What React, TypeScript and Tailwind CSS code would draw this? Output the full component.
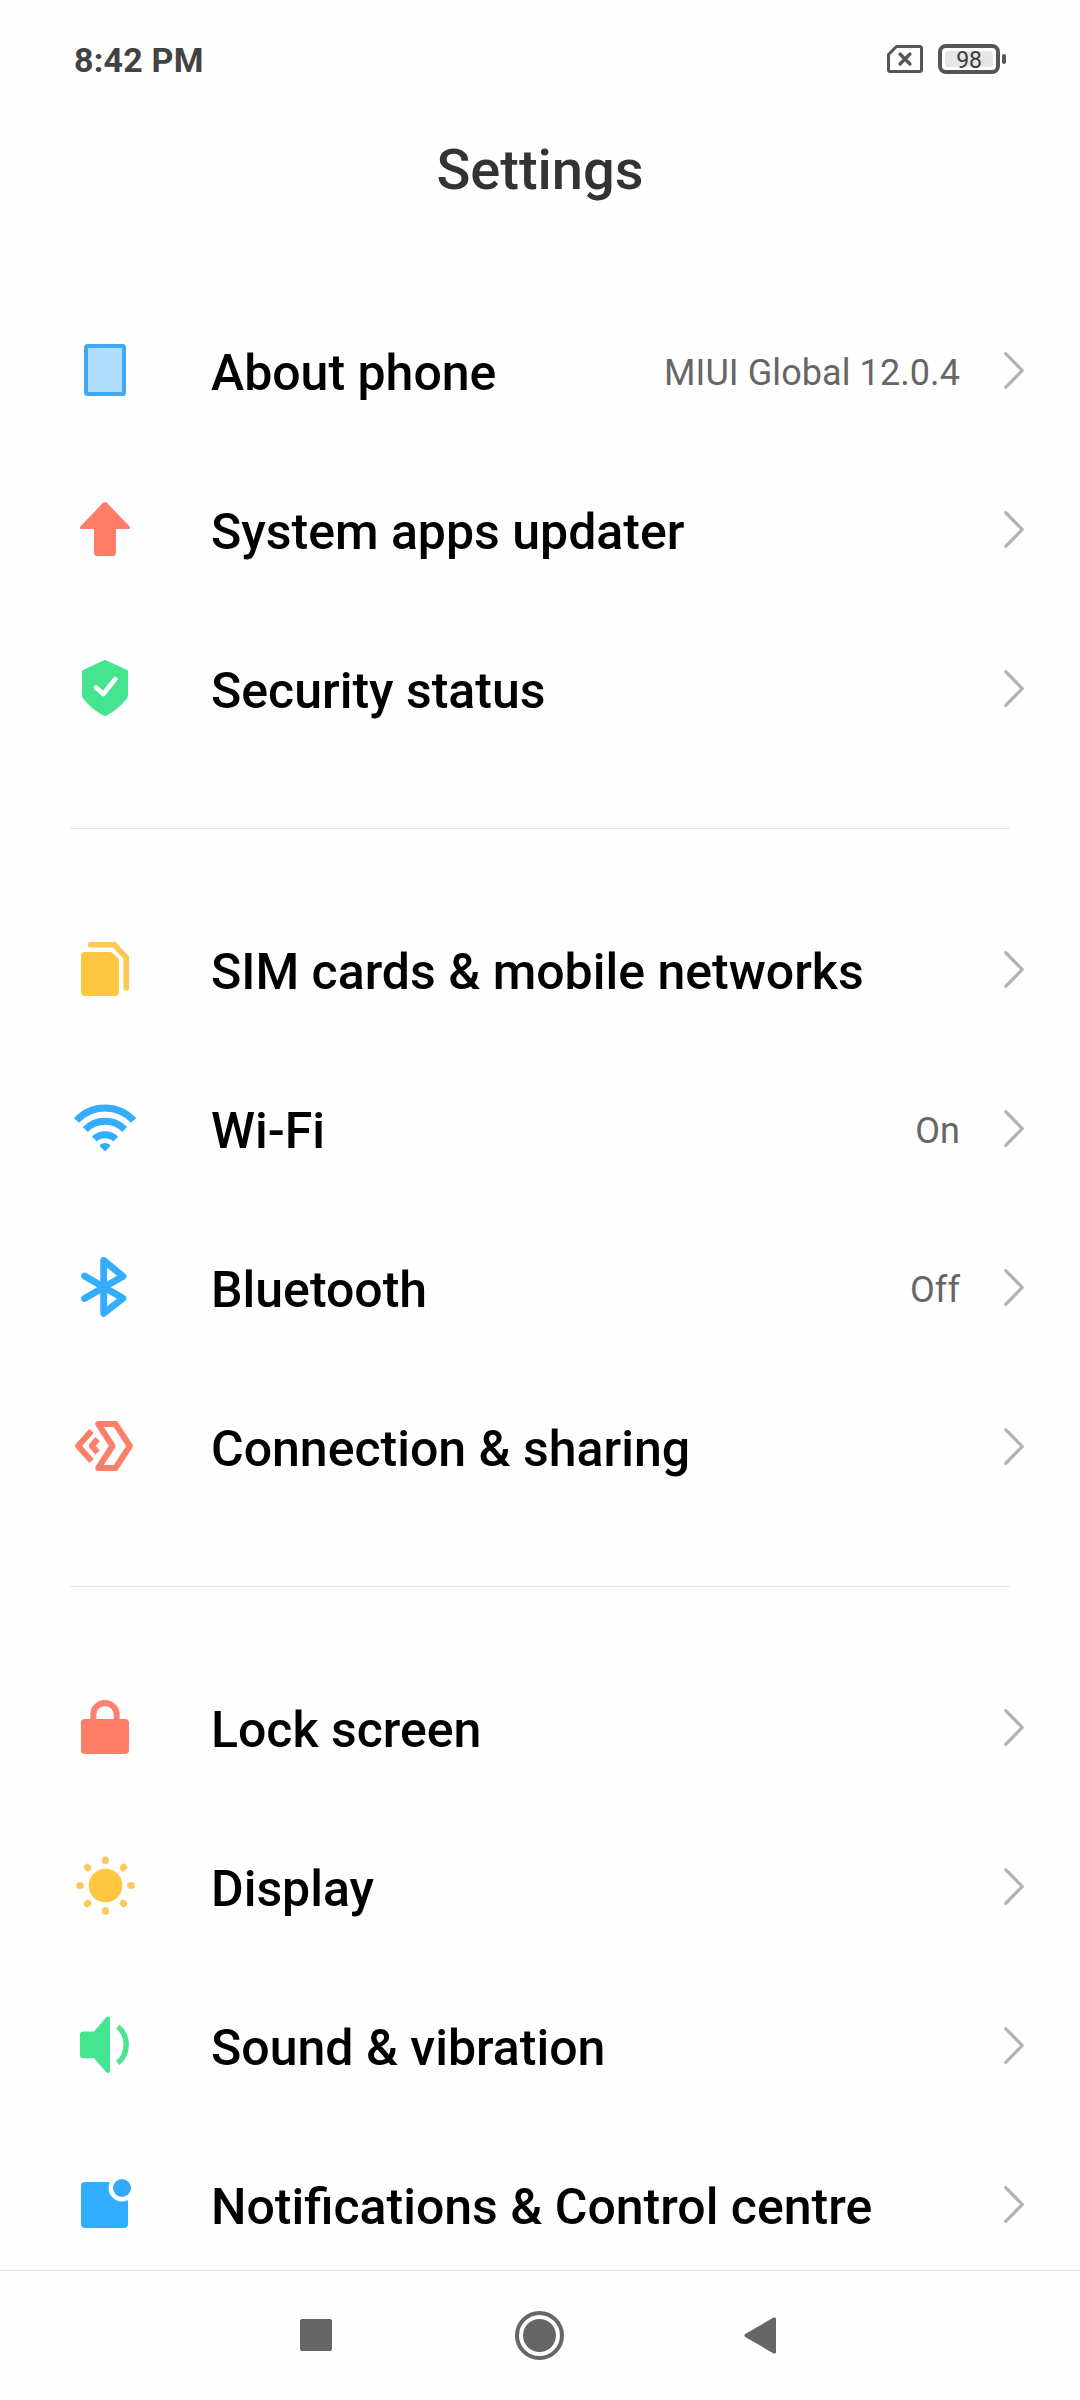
import type { ReactNode } from "react";

type Item = {
  label: string;
  value?: string;
  icon: ReactNode;
};

const RAYS = [0, 45, 90, 135, 180, 225, 270, 315];

const PhoneIcon = () => (
  <rect x="13" y="8" width="38" height="48" rx="1.5" fill="#b0defe" stroke="#41a9f1" strokeWidth="4" />
);

const UpdateIcon = () => (
  <path
    d="M30.4 5.6Q32 4.2 33.6 5.6L56.5 29.3Q58 32 55.5 32H43V55.5Q43 59 39.5 59H24.5Q21 59 21 55.5V32H8.5Q6 32 7.5 29.3Z"
    fill="#ff7c66"
  />
);

const ShieldIcon = () => (
  <>
    <path
      d="M30.5 4.5Q32 3.5 33.5 4.5L54 14Q55 14.5 55 15.5V39.5Q55 41.5 53.5 43Q45 53.5 34 59.3Q32 60.5 30 59.3Q19 53.5 10.5 43Q9 41.5 9 39.5V15.5Q9 14.5 10 14Z"
      fill="#44e58e"
    />
    <path d="M23 31.5L30.3 38L42.3 23" fill="none" stroke="#fff" strokeWidth="4.6" strokeLinecap="round" strokeLinejoin="round" />
  </>
);

const SimIcon = () => (
  <>
    <path
      d="M12 15H36.5Q38.5 15 39.8 16.3L44.5 20.5Q46 22 46 24V55Q46 59 42 59H12Q8 59 8 55V19Q8 15 12 15Z"
      fill="#ffc642"
    />
    <path d="M17.5 7.7H41.2L53.3 20.5V51" fill="none" stroke="#fcc853" strokeWidth="5.6" strokeLinecap="round" />
  </>
);

const WifiIcon = () => (
  <>
    <g fill="none" stroke="#34adff" strokeWidth="7">
      <path d="M3.5 24.5A38.6 38.6 0 0 1 60.5 24.5" />
      <path d="M12.3 33.5A27.5 27.5 0 0 1 51.7 33.5" />
      <path d="M21.3 43A15.6 15.6 0 0 1 42.7 43" />
    </g>
    <path d="M27.3 48.6Q32 45.2 36.7 48.6Q37.6 49.6 36.7 50.7L33 54.5Q32 55.4 31 54.5L27.3 50.7Q26.4 49.6 27.3 48.6Z" fill="#34adff" />
  </>
);

const BluetoothIcon = () => (
  <path
    d="M11.5 21L50 43.2L30.7 58.3V5.5L50 21.3L11.5 43.5"
    fill="none"
    stroke="#34adff"
    strokeWidth="6.8"
    strokeLinecap="round"
    strokeLinejoin="round"
  />
);

const ShareIcon = () => (
  <g fill="none" stroke="#fb7f6a" strokeWidth="6" strokeLinejoin="round">
    <path d="M25.3 10H42.5L56.8 32L42.5 54H25.3L39.5 32Z" />
    <path d="M18.5 17L5.1 32L18.5 47" />
    <path d="M24.5 25L18.8 31.8L24.5 38.6" />
  </g>
);

const LockIcon = () => (
  <>
    <path d="M20.3 28V19.7A11.7 11.7 0 0 1 43.7 19.7V28" fill="none" stroke="#f9836f" strokeWidth="6" />
    <rect x="8" y="24" width="48" height="35" rx="4" fill="#ff7c66" />
  </>
);

const DisplayIcon = () => (
  <>
    <circle cx="32.5" cy="31.5" r="16.8" fill="#ffc642" />
    {RAYS.map((angle) => (
      <rect
        key={angle}
        x="29.2"
        y="2.4"
        width="6.6"
        height="7.4"
        rx="2.6"
        fill="#fbc859"
        transform={`rotate(${angle} 32.5 31.5)`}
      />
    ))}
  </>
);

const SoundIcon = () => (
  <>
    <path
      d="M10 18.5H21L33 4.4Q34.2 3.2 35.5 3.5Q37 3.8 37 5.5V58Q37 59.6 35.5 60Q34.2 60.3 33 59L21 45.3H10Q7 45.3 7 42.3V21.5Q7 18.5 10 18.5Z"
      fill="#44e58e"
    />
    <path d="M44.8 13.5A24 24 0 0 1 44.8 50" fill="none" stroke="#4be493" strokeWidth="5.4" />
  </>
);

const NotificationIcon = () => (
  <>
    <rect x="8" y="10" width="47" height="46" rx="4" fill="#30adff" />
    <circle cx="49" cy="16" r="13.5" fill="#fefefe" />
    <circle cx="49" cy="16" r="9" fill="#34a9fb" />
  </>
);

const groups: Item[][] = [
  [
    { label: "About phone", value: "MIUI Global 12.0.4", icon: <PhoneIcon /> },
    { label: "System apps updater", icon: <UpdateIcon /> },
    { label: "Security status", icon: <ShieldIcon /> },
  ],
  [
    { label: "SIM cards & mobile networks", icon: <SimIcon /> },
    { label: "Wi-Fi", value: "On", icon: <WifiIcon /> },
    { label: "Bluetooth", value: "Off", icon: <BluetoothIcon /> },
    { label: "Connection & sharing", icon: <ShareIcon /> },
  ],
  [
    { label: "Lock screen", icon: <LockIcon /> },
    { label: "Display", icon: <DisplayIcon /> },
    { label: "Sound & vibration", icon: <SoundIcon /> },
    { label: "Notifications & Control centre", icon: <NotificationIcon /> },
  ],
];

const StatusBar = () => (
  <div className="flex h-[118px] shrink-0 items-center justify-between pr-[74px] pl-[74px]">
    <span className="pt-[2px] text-[34px] leading-[40px] font-bold tracking-[0.2px] text-[#424242]">8:42 PM</span>
    <div className="flex items-center">
      {/* No SIM */}
      <svg width="36" height="28" viewBox="0 0 36 28" fill="none" stroke="#555" strokeLinecap="round" strokeLinejoin="round">
        <path d="M9.5 1.5H32.5Q34.5 1.5 34.5 3.5V24.5Q34.5 26.5 32.5 26.5H3.5Q1.5 26.5 1.5 24.5V9.5Z" strokeWidth="3" />
        <path d="M13 9L23 19M23 9L13 19" strokeWidth="3.2" />
      </svg>
      {/* Battery */}
      <div className="ml-[15px] flex h-[30px] w-[62px] items-center justify-center rounded-[8px] border-4 border-[#555] p-[3px]">
        <span className="flex h-4 w-full items-center justify-center rounded-[2px] bg-[#e6e6e6] pt-[3px] text-[23px] leading-[26px] tracking-[-0.3px] text-[#3c3c3c]">98</span>
      </div>
      <span className="ml-[2px] h-[10px] w-1 rounded-[2px] bg-[#555]" />
    </div>
  </div>
);

const Row = ({ label, value, icon }: Item) => (
  <div className="flex h-[159px] items-center pr-[56px] pl-[73px]">
    <svg className="shrink-0" width="64" height="65" viewBox="0 0 64 65">
      {icon}
    </svg>
    <span className="ml-[74px] flex-1 pt-[5px] text-[50px] leading-[58px] font-medium whitespace-nowrap text-black">{label}</span>
    {value && <span className="pt-[5px] text-[36px] leading-[42px] tracking-[0.08px] text-[#666]">{value}</span>}
    <svg className="ml-[44px] shrink-0" width="20" height="37" viewBox="0 0 20 37" fill="none">
      <path d="M1.7 1.7L18.3 18.5L1.7 35.3" stroke="#b2b2b2" strokeWidth="3.2" strokeLinecap="round" strokeLinejoin="round" />
    </svg>
  </div>
);

const NavBar = () => (
  <div className="flex h-[130px] shrink-0 items-start border-t border-[#e2e2e2] pt-[40px] pl-[300px]">
    <span className="mt-2 size-8 rounded-[2px] bg-[#666]" />
    <svg className="ml-[183px]" width="50" height="50" viewBox="0 0 50 50">
      <circle cx="24.5" cy="24.5" r="22.5" fill="none" stroke="#666" strokeWidth="4" />
      <circle cx="24.5" cy="24.5" r="16.5" fill="#666" />
    </svg>
    <svg className="mt-[6px] ml-[179px]" width="32" height="38" viewBox="0 0 32 38">
      <path d="M1.2 17.1L29.5 0.6Q32 -0.2 32 2V35Q32 37.2 29.5 36.4L1.2 19.9Q-0.4 18.5 1.2 17.1Z" fill="#666" />
    </svg>
  </div>
);

export default function App() {
  return (
    <div className="flex h-[2400px] w-[1080px] flex-col overflow-hidden bg-[#fefefe] font-['Roboto',sans-serif]">
      <StatusBar />
      <h1 className="h-[173px] shrink-0 pt-[20px] text-center text-[56px] leading-[64px] font-medium text-[#333]">Settings</h1>
      <main className="min-h-0 flex-1 overflow-hidden">
        {groups.map((items, i) => (
          <section key={i}>
            {i > 0 && <div className="mx-[70px] mt-[60px] mb-[61px] h-px bg-[#e4e4e4]" />}
            {items.map((item) => (
              <Row key={item.label} {...item} />
            ))}
          </section>
        ))}
      </main>
      <NavBar />
    </div>
  );
}
